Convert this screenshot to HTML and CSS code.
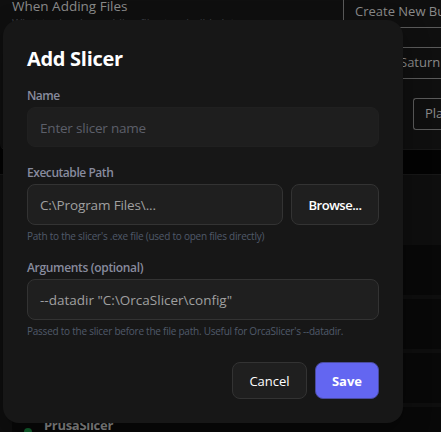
FILE: index.html
```html
<!DOCTYPE html>
<html lang="en">
<head>
<meta charset="utf-8">
<title>Add Slicer</title>
<link rel="stylesheet" href="styles.css">
</head>
<body>
<main class="page">
  <section class="settings">
    <div class="setting first">
      <div class="copy">
        <div class="setting-title"><span class="t-when">When Adding Files</span></div>
        <div class="setting-note">What to do when adding files to a build plate</div>
      </div>
      <div class="select create"><span class="t-create">Create New Build</span></div>
    </div>
    <div class="setting"><div class="select saturn"><span class="t-saturn">Saturn</span></div></div>
    <div class="setting"><div class="select plate"><span class="t-plate">Plates</span></div></div>
  </section>
  <section class="slicers">
    <header class="slicers-head"></header>
    <div class="row"></div>
    <div class="row"></div>
    <div class="row"></div>
    <div class="row last"><i class="dot"></i><span class="t-prusa">PrusaSlicer</span></div>
  </section>
</main>
<form class="modal">
  <h1><span class="t-title">Add Slicer</span></h1>
  <div class="field name">
    <label><span class="t-name">Name</span></label>
    <div class="input quiet"><span class="t-enter">Enter slicer name</span></div>
  </div>
  <div class="field path">
    <label><span class="t-exec">Executable Path</span></label>
    <div class="line">
      <div class="input"><span class="t-program">C:\Program Files\...</span></div>
      <button type="button" class="browse"><span class="t-browse">Browse...</span></button>
    </div>
    <p class="hint"><span class="t-hint1">Path to the slicer's .exe file (used to open files directly)</span></p>
  </div>
  <div class="field args">
    <label><span class="t-args">Arguments (optional)</span></label>
    <div class="input"><span class="t-data">--datadir "C:\OrcaSlicer\config"</span></div>
    <p class="hint"><span class="t-hint2">Passed to the slicer before the file path. Useful for OrcaSlicer's --datadir.</span></p>
  </div>
  <div class="actions">
    <button type="button" class="cancel"><span class="t-cancel">Cancel</span></button>
    <button type="button" class="save"><span class="t-save">Save</span></button>
  </div>
</form>
</body>
</html>
```
FILE: styles.css
```css
* { box-sizing: border-box; }
body {
  margin: 0;
  width: 441px;
  height: 432px;
  overflow: hidden;
  position: relative;
  background: #030303;
  font-family: "Open Sans", "Noto Sans", sans-serif;
  font-size: 13px;
  color: #8a8a8a;
}
span { white-space: nowrap; }
.page { height: 432px; overflow: hidden; }
.settings {
  height: 150px;
  background: #0f0f0f;
  border-bottom: 1px solid #171717;
  border-radius: 0 0 0 6px;
}
.setting { display: flex; justify-content: flex-end; height: 51px; padding-top: 16px; }
.setting.first { height: 31px; padding-top: 0; }
.copy { flex: 1; padding-left: 12px; }
.setting-title { height: 14px; line-height: 12px; font-size: 13.5px; }
.setting-note { font-size: 11px; line-height: 14px; margin-top: 2px; color: #3c3f45; white-space: nowrap; }
.select {
  height: 32px;
  border: 1px solid #5a5a5a;
  border-right: 0;
  border-radius: 3px 0 0 3px;
  line-height: 29px;
  padding-left: 11px;
}
.create { width: 98px; height: 28px; border-top: 0; border-top-left-radius: 0; line-height: 23px; }
.saturn { width: 52px; }
.plate { width: 28px; }
.t-saturn { margin-left: -1px; }
.slicers { margin: 24px 0 0 0; background: #0e0e0e; border-top: 1px solid #171717; }
.slicers-head { height: 70px; }
.row { height: 50px; margin: 0 0 4px 12px; background: #080808; }
.row.last { display: flex; align-items: center; height: 50px; padding: 0 0 14px 12px; gap: 12px; }
.dot { width: 8px; height: 8px; border-radius: 50%; background: #11612f; margin-top: 14px; }
.t-prusa { font-weight: 700; letter-spacing: -.3px; }

.modal {
  position: absolute;
  left: 3px;
  top: 20px;
  width: 400px;
  height: 403px;
  padding: 24px;
  border-radius: 16px;
  background: #171717;
  box-shadow: 0 10px 28px rgba(0, 0, 0, .3);
}
h1 { margin: 0; height: 44px; line-height: 29px; font-size: 20px; font-weight: 700; color: #fff; }
.t-title { letter-spacing: -.3px; }
.field label { display: block; height: 19px; line-height: 15px; font-size: 12px; font-weight: 600; color: #888b9e; }
.t-name { letter-spacing: -.55px; }
.t-exec { letter-spacing: -.45px; }
.t-args { letter-spacing: -.33px; }
.name { height: 77px; }
.path { height: 95px; }
.line { display: flex; gap: 8px; }
.input {
  flex: 1;
  height: 41px;
  padding-left: 12px;
  line-height: 40px;
  border: 1px solid #333;
  border-radius: 8px;
  background: #1f1f1f;
  color: #a0a0a0;
  font-size: 13.5px;
}
.input.quiet { height: 40px; border-color: #202020; background: #1e1e1e; color: #5c5f69; }
.t-enter { letter-spacing: -.2px; }
.t-program { letter-spacing: -.13px; }
.hint { margin: 4px 0 0; font-size: 10px; line-height: 14px; color: #505a6a; }
.t-hint1, .t-hint2 { letter-spacing: -.24px; }
button {
  display: flex;
  align-items: center;
  justify-content: center;
  padding: 0;
  border: 1px solid #333;
  border-radius: 8px;
  background: #1f1f1f;
  color: #fff;
  font: 500 13px "Open Sans", sans-serif;
}
.browse { width: 88px; height: 41px; font-weight: 600; }
.t-browse { letter-spacing: -.45px; }
.args { height: 102px; }
.actions { display: flex; justify-content: flex-end; gap: 8px; }
.cancel { width: 75px; height: 37px; }
.save { width: 64px; height: 37px; border-color: #4a4b9e; background: #6366f1; font-weight: 700; }
```
